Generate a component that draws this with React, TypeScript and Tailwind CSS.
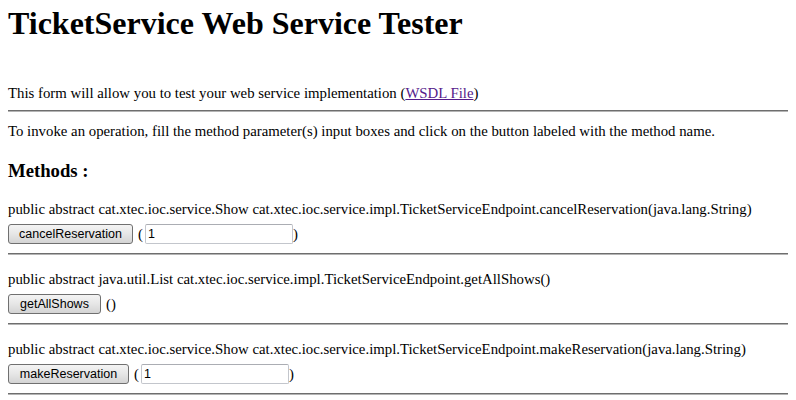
import React from "react";

type Method = {
  signature: string;
  name: string;
  width: string;
  hasParam: boolean;
};

const methods: Method[] = [
  {
    signature:
      "public abstract cat.xtec.ioc.service.Show cat.xtec.ioc.service.impl.TicketServiceEndpoint.cancelReservation(java.lang.String)",
    name: "cancelReservation",
    width: "w-[125px]",
    hasParam: true,
  },
  {
    signature:
      "public abstract java.util.List cat.xtec.ioc.service.impl.TicketServiceEndpoint.getAllShows()",
    name: "getAllShows",
    width: "w-[93px]",
    hasParam: false,
  },
  {
    signature:
      "public abstract cat.xtec.ioc.service.Show cat.xtec.ioc.service.impl.TicketServiceEndpoint.makeReservation(java.lang.String)",
    name: "makeReservation",
    width: "w-[121px]",
    hasParam: true,
  },
];

const Rule = () => (
  <div className="h-[2px] w-full border-t border-b border-t-[#6e6e6e] border-b-[#b4b4b4]" />
);

const MethodBlock: React.FC<Method> = ({ signature, name, width, hasParam }) => (
  <div>
    <p className="text-[14.8px] leading-[18px] whitespace-nowrap">{signature}</p>
    <div className="mt-[6px] flex h-[20px] items-center text-[14.8px] leading-[18px]">
      <button
        type="button"
        className={`${width} h-[20px] rounded-[3px] border border-[#707070] bg-gradient-to-b from-[#f4f4f4] via-[#e6e6e6] to-[#d4d4d4] text-center text-[12.5px] leading-[18px] text-black`}
        style={{ fontFamily: '"Liberation Sans", Arial, sans-serif' }}
      >
        {name}
      </button>
      {hasParam ? (
        <>
          <span className="ml-[5px]">(</span>
          <input
            type="text"
            defaultValue="1"
            className="ml-[2px] h-[20px] w-[148px] rounded-[2px] border border-[#c3c6cc] border-t-[#abadb3] bg-white px-[2px] text-[12.5px] text-black outline-none"
            style={{ fontFamily: '"Liberation Sans", Arial, sans-serif' }}
          />
          <span>)</span>
        </>
      ) : (
        <span className="ml-[5px]">()</span>
      )}
    </div>
    <div className="mt-[9px]">
      <Rule />
    </div>
  </div>
);

export default function App() {
  return (
    <div
      className="min-h-[400px] bg-white px-[8px] pt-[5px] text-black"
      style={{ fontFamily: '"Liberation Serif", "Times New Roman", serif' }}
    >
      <h1 className="text-[32px] font-bold leading-[36px]">
        TicketService Web Service Tester
      </h1>

      <p className="mt-[43px] text-[14.8px] leading-[18px]">
        This form will allow you to test your web service implementation (
        <a href="#" className="text-[#551a8b] underline">
          WSDL File
        </a>
        )
      </p>

      <div className="mt-[8px]">
        <Rule />
      </div>

      <p className="mt-[10px] text-[14.8px] leading-[18px]">
        To invoke an operation, fill the method parameter(s) input boxes and
        click on the button labeled with the method name.
      </p>

      <h3 className="mt-[20px] text-[18.72px] font-bold leading-[22px]">
        Methods :
      </h3>

      <div className="mt-[18px] flex flex-col gap-[15px]">
        {methods.map((m) => (
          <MethodBlock key={m.name} {...m} />
        ))}
      </div>
    </div>
  );
}
